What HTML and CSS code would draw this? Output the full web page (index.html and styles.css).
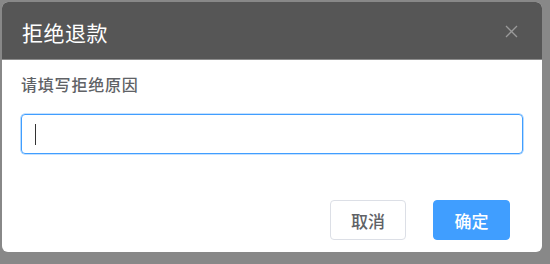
FILE: index.html
```html
<!DOCTYPE html>
<html>
	<head>
		<meta charset="UTF-8">
		<link rel="stylesheet" href="styles.css">
	</head>
	<body>
		<div class="dialog">
			<div class="dialog-header">
				<span class="dialog-title">拒绝退款</span>
				<svg class="dialog-close" width="13" height="13" viewBox="0 0 13 13">
					<path d="M1 1 L12 12 M12 1 L1 12" stroke="#9a9a9a" stroke-width="1.3" fill="none"/>
				</svg>
			</div>
			<div class="dialog-body">
				<div class="field-label">请填写拒绝原因</div>
				<div class="text-input"><span class="caret"></span></div>
			</div>
			<div class="dialog-footer">
				<button class="btn">取消</button>
				<button class="btn btn-primary">确定</button>
			</div>
		</div>
	</body>
</html>
```

FILE: styles.css
```css
body {
	margin: 0;
	background-color: #888888;
	font-family: "Noto Sans CJK SC", "Noto Sans", sans-serif;
}
.dialog {
	margin: 2px 0 0 2px;
	width: 540px;
	height: 250px;
	background: #ffffff;
	border-radius: 6px;
	overflow: hidden;
	display: flex;
	flex-direction: column;
}
.dialog-header {
	height: 57px;
	background: #565656;
	border-bottom: 1px solid #8c8c8c;
	display: flex;
	align-items: center;
	justify-content: space-between;
	padding: 0 24px 0 20px;
}
.dialog-title {
	color: #ffffff;
	font-size: 21px;
	line-height: 24px;
	letter-spacing: 0.5px;
	margin-top: 2px;
}
.dialog-close {
	display: block;
	margin-top: 2px;
}
.dialog-body {
	padding: 12px 19px 0 19px;
}
.field-label {
	font-size: 16px;
	line-height: 24px;
	letter-spacing: 0.8px;
	color: #606266;
	font-weight: 500;
}
.text-input {
	margin-top: 18px;
	height: 38px;
	border: 1px solid #409eff;
	box-shadow: 0 0 0 0.6px rgba(64, 158, 255, 0.6);
	border-radius: 4px;
	display: flex;
	align-items: center;
	padding-left: 13px;
}
.caret {
	width: 1px;
	height: 21px;
	background: #333333;
}
.dialog-footer {
	margin-top: auto;
	padding: 0 32px 12px 0;
	display: flex;
	justify-content: flex-end;
	gap: 27px;
}
.btn {
	width: 76px;
	height: 40px;
	border: 1px solid #dcdfe6;
	border-radius: 4px;
	background: #ffffff;
	color: #606266;
	font-family: inherit;
	font-size: 17px;
	font-weight: 500;
	padding: 0;
}
.btn-primary {
	width: 77px;
	background: #409eff;
	border-color: #409eff;
	color: #ffffff;
}
```
